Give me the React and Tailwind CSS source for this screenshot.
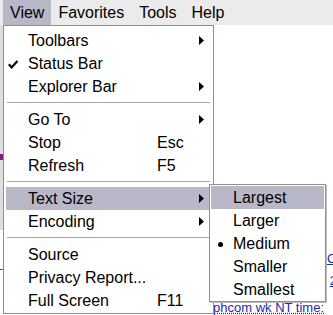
import React from "react";

const Arrow = () => (
  <svg width="5" height="9" viewBox="0 0 5 9" className="ml-auto shrink-0">
    <path d="M0 0 L5 4.5 L0 9 Z" fill="#000" />
  </svg>
);

const Check = () => (
  <svg width="10" height="9" viewBox="0 0 10 9" className="absolute left-[2px] top-[8px]">
    <path d="M0.8 4.3 L3.6 7.4 L9.4 1" stroke="#000" strokeWidth="2.2" fill="none" />
  </svg>
);

function Row({ label, shortcut, arrow, check, active }) {
  return (
    <div
      className={
        "relative mx-[2px] h-[23px] flex items-center pl-[22px] pr-[7px] " +
        (active ? "bg-[#b9b8c8]" : "")
      }
    >
      {check && <Check />}
      <span className="w-[129px] shrink-0 whitespace-nowrap">{label}</span>
      {shortcut && <span className="whitespace-nowrap">{shortcut}</span>}
      {arrow && <Arrow />}
    </div>
  );
}

const Sep = () => (
  <div className="h-[10px] flex items-center px-[3px]">
    <div className="w-full h-px bg-[#a6a6a6] -mt-px" />
  </div>
);

function SubRow({ label, active, bullet }) {
  return (
    <div
      className={
        "relative mx-px h-[23px] flex items-center pl-[22px] " +
        (active ? "bg-[#b9b8c8]" : "")
      }
    >
      {bullet && (
        <span className="absolute left-[7px] top-[10px] w-[5px] h-[5px] rounded-full bg-black" />
      )}
      <span className="whitespace-nowrap">{label}</span>
    </div>
  );
}

export default function App() {
  return (
    <div
      className="relative w-[333px] h-[315px] overflow-hidden bg-white text-black text-[16px] flex flex-col"
      style={{ fontFamily: '"Liberation Sans", Arial, sans-serif' }}
    >
      {/* menubar */}
      <div className="h-[25px] shrink-0 bg-[#ebebeb] flex items-stretch pl-[3px]">
        <div className="px-[7px] flex items-center bg-[#b9b8c8]">View</div>
        <div className="px-[7px] flex items-center">Favorites</div>
        <div className="px-[8px] flex items-center">Tools</div>
        <div className="px-[7px] flex items-center">Help</div>
      </div>

      {/* background page (mostly hidden by the menus) */}
      <div className="flex-1 flex">
        <div className="w-[3px] shrink-0 flex flex-col">
          <div className="h-[129px] bg-[#dedede]" />
          <div className="h-[6px] bg-[#7a1f7a]" />
          <div className="h-[70px] bg-[#dedede]" />
          <div className="h-[26px]" />
          <div className="h-[14px] border-b border-[#4a4ab0]" />
        </div>
        <div className="w-[208px] shrink-0" />
        <div className="w-[2px] shrink-0 flex flex-col">
          <div className="h-[15px] bg-[#c2c2c2]" />
          <div className="h-[14px] bg-[#6f8fa8]" />
          <div className="h-[101px] bg-[#c2c2c2]" />
          <div className="h-[6px] bg-[#6a1f6a]" />
          <div className="h-[24px] bg-[#c2c2c2]" />
        </div>
        <div className="flex-1 flex flex-col items-end pt-[227px] text-[#1a2ab0] text-[13px] leading-none overflow-hidden">
          <span className="underline mr-[-4px] h-[22px]">O</span>
          <span className="underline mr-[-4px] h-[27px]">2</span>
          <span className="self-start whitespace-nowrap underline decoration-dotted">phcom wk NT time:</span>
        </div>
      </div>

      {/* main menu */}
      <div className="absolute left-[3px] top-[25px] w-[211px] h-[289px] bg-white border border-[#8f8f8f] pt-[3px]">
        <Row label="Toolbars" arrow />
        <Row label="Status Bar" check />
        <Row label="Explorer Bar" arrow />
        <Sep />
        <Row label="Go To" arrow />
        <Row label="Stop" shortcut="Esc" />
        <Row label="Refresh" shortcut="F5" />
        <Sep />
        <Row label="Text Size" arrow active />
        <Row label="Encoding" arrow />
        <Sep />
        <Row label="Source" />
        <Row label="Privacy Report..." />
        <Row label="Full Screen" shortcut="F11" />
      </div>

      {/* submenu */}
      <div className="absolute left-[209px] top-[184px] w-[117px] h-[118px] bg-white border border-[#8f8f8f] pt-px shadow-[1px_1px_0_#bdbdbd]">
        <SubRow label="Largest" active />
        <SubRow label="Larger" />
        <SubRow label="Medium" bullet />
        <SubRow label="Smaller" />
        <SubRow label="Smallest" />
      </div>
    </div>
  );
}
